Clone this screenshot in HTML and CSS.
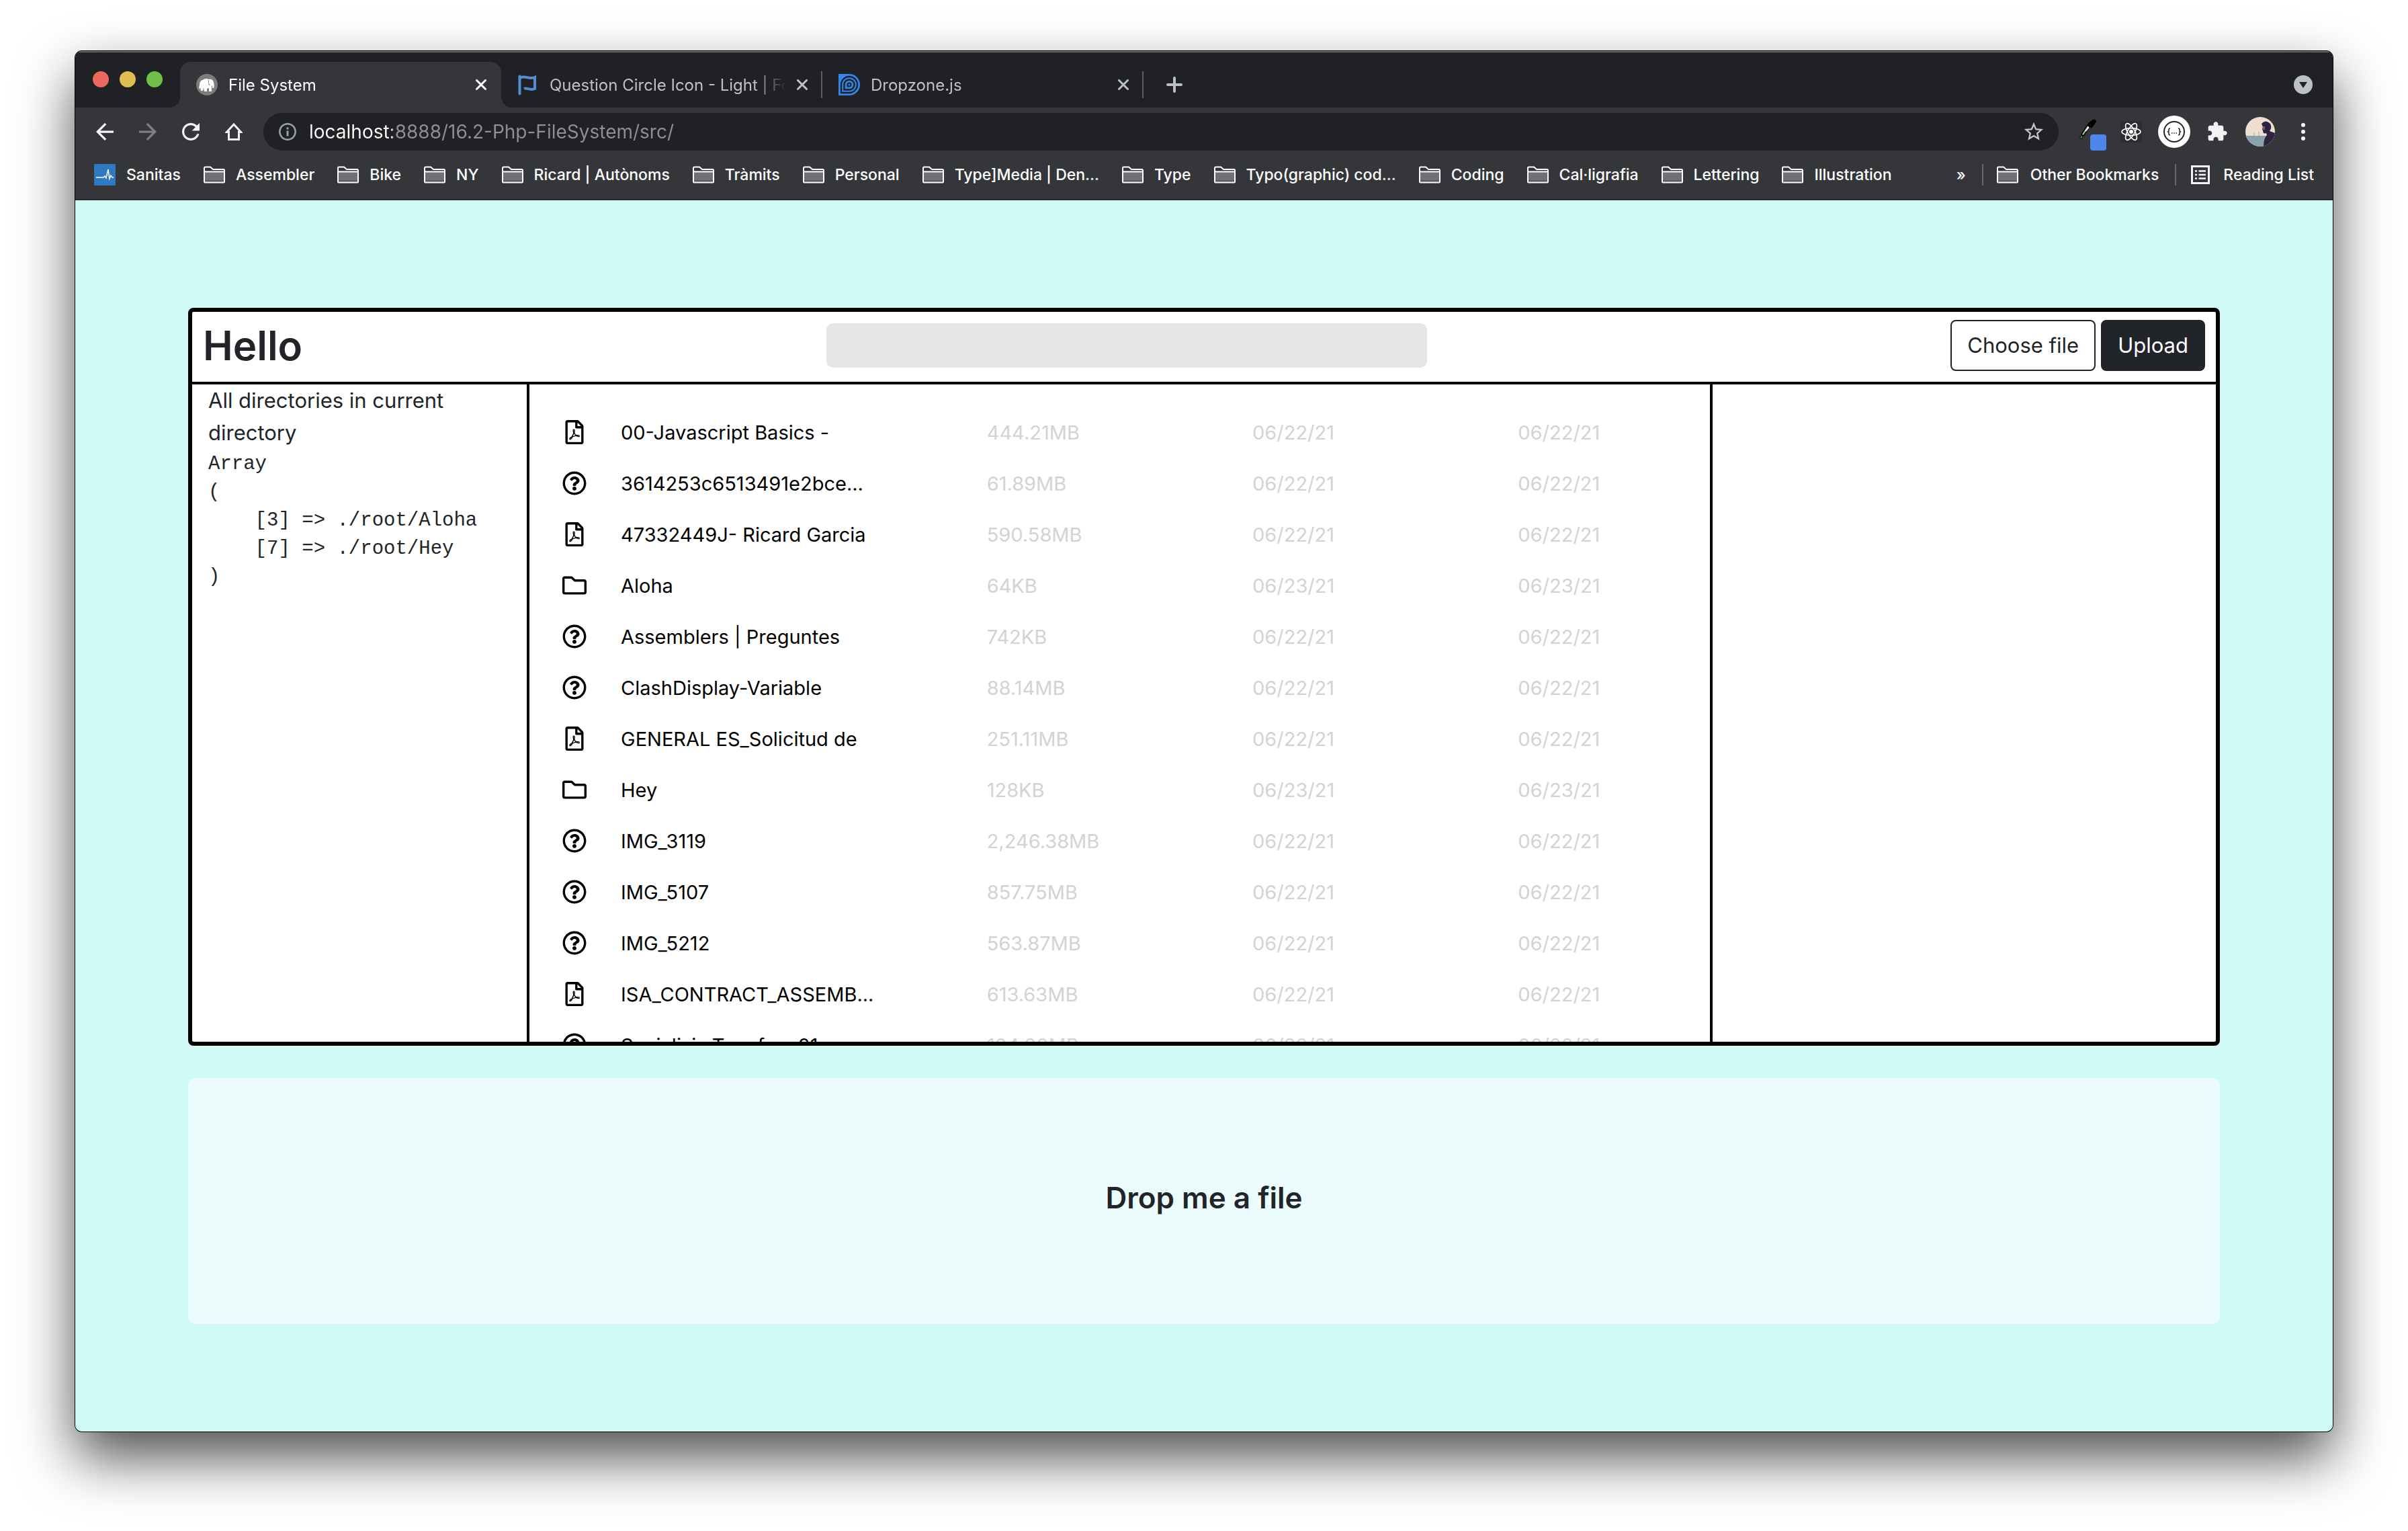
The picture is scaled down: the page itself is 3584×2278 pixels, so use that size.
FILE: index.html
```html
<!DOCTYPE html>
<html lang="en">
<head>
<meta charset="utf-8">
<title>File System</title>
<link rel="stylesheet" href="styles.css">
</head>
<body>
<svg class="sprite" aria-hidden="true">
  <symbol id="folder" viewBox="0 0 512 512"><path d="M464 128H272l-54.63-54.63c-6-6-14.14-9.37-22.63-9.37H48C21.49 64 0 85.49 0 112v288c0 26.51 21.49 48 48 48h416c26.51 0 48-21.49 48-48V176c0-26.51-21.49-48-48-48zm0 272H48V112h140.12l54.63 54.63c6 6 14.14 9.37 22.63 9.37H464v224z"/></symbol>
  <symbol id="unknown" viewBox="0 0 512 512"><path d="M256 8C119.043 8 8 119.083 8 256c0 136.997 111.043 248 248 248s248-111.003 248-248C504 119.083 392.957 8 256 8zm0 448c-110.532 0-200-89.431-200-200 0-110.495 89.472-200 200-200 110.491 0 200 89.471 200 200 0 110.53-89.431 200-200 200zm107.244-255.2c0 67.052-72.421 68.084-72.421 92.863V300c0 6.627-5.373 12-12 12h-45.647c-6.627 0-12-5.373-12-12v-8.659c0-35.745 27.1-50.034 47.579-61.516 17.561-9.845 28.324-16.541 28.324-29.579 0-17.246-21.999-28.693-39.784-28.693-23.189 0-33.894 10.977-48.942 29.969-4.057 5.12-11.46 6.071-16.666 2.124l-27.824-21.098c-5.107-3.872-6.251-11.066-2.644-16.363C184.846 131.491 214.94 112 261.794 112c49.071 0 101.45 38.304 101.45 88.8zM298 368c0 23.159-18.841 42-42 42s-42-18.841-42-42 18.841-42 42-42 42 18.841 42 42z"/></symbol>
  <symbol id="pdf" viewBox="-64 0 512 512"><path d="M369.9 97.9L286 14C277 5 264.8-.1 252.1-.1H48C21.5 0 0 21.5 0 48v416c0 26.5 21.5 48 48 48h288c26.5 0 48-21.5 48-48V131.9c0-12.7-5.1-25-14.1-34zM332.1 128H256V51.9l76.1 76.1zM48 464V48h160v104c0 13.3 10.7 24 24 24h104v288H48zm250.2-143.7c-12.2-12-47-8.7-64.4-6.5-17.2-10.5-28.7-25-36.8-46.3 3.9-16.1 10.1-40.6 5.4-56-4.2-26.2-37.8-23.6-42.6-5.9-4.4 16.1-.4 38.5 7 67.1-10 23.9-24.9 56-35.4 74.4-20 10.3-47 26.2-51 46.2-3.3 15.8 26 55.2 76.1-31.2 22.4-7.4 46.8-16.5 68.4-20.1 18.9 10.2 41 17 55.8 17 25.5 0 28-28.2 17.5-38.7zm-198.1 77.8c5.1-13.7 24.5-29.5 30.4-35-19 30.3-30.4 35.7-30.4 35zm81.6-190.6c7.4 0 6.7 32.1 1.8 40.8-4.4-13.9-4.3-40.8-1.8-40.8zm-24.4 136.6c9.7-16.9 18-37 24.7-54.7 8.3 15.1 18.9 27.2 30.1 35.5-20.8 4.3-38.9 13.1-54.8 19.2zm131.6-5s-5 6-37.3-7.8c35.1-2.6 40.9 5.4 37.3 7.8z"/></symbol>
  <symbol id="bmfolder" viewBox="0 0 32 32"><path d="M1 27V6q0-2 2-2h8l4 4h14q2 0 2 2v17q0 1-1 1H2q-1 0-1-1z" fill="#35363a"/><path d="M2 12h28v15H2z" fill="#707174"/><path d="M2 24h28v3H2z" fill="#5a5b5e"/><path d="M1 26.500V6q0-1.500 1.500-1.500H10l4 3.500h15.500q1.500 0 1.500 1.500v17q0 1-1 1H2q-1 0-1-1zM1 11.500h30" fill="none" stroke="#fff" stroke-width="2"/></symbol>
  <symbol id="close" viewBox="0 0 16 16"><path d="M1.500 1.500l13 13M14.500 1.500l-13 13" fill="none" stroke="currentColor" stroke-width="3" stroke-linecap="round"/></symbol>
</svg>

<div class="window">
  <header class="chrome">
    <div class="strip">
      <div class="lights">
        <button class="light red" aria-label="Close window"></button>
        <button class="light yellow" aria-label="Minimise"></button>
        <button class="light green" aria-label="Full screen"></button>
      </div>
      <div class="tab active">
        <svg class="favicon" viewBox="0 0 32 32"><circle cx="16" cy="16" r="16" fill="#7d7d7d"/><path d="M5 17c0-5 2-8 5-8 2-2 6-3 8-1 4-1 8 1 8 5 1 3 1 6 0 8h-2v-4l-1 1v8h-4v-5l-3 1v4h-4l-1-6-1 5H7l-1-5-1 3c-1-2-1-4 0-6z" fill="#fff"/><path d="M18.500 9v6l2 2" fill="none" stroke="#999" stroke-width="1.200"/></svg>
        <span class="tab-title">File System</span>
        <button class="tab-close" aria-label="Close tab"><svg><use href="#close"/></svg></button>
      </div>
      <div class="tab">
        <svg class="favicon" viewBox="0 0 32 32"><path d="M3.500 3.500v26" stroke="#538dd7" stroke-width="4" stroke-linecap="round"/><path d="M4 6c7-5 12 3 22-1v17c-7 3-12-2-16 0" fill="none" stroke="#538dd7" stroke-width="4"/></svg>
        <span class="tab-title">Question Circle Icon - Light | Fo</span>
        <button class="tab-close" aria-label="Close tab"><svg><use href="#close"/></svg></button>
      </div>
      <div class="tab">
        <svg class="favicon" viewBox="0 0 32 32"><path d="M0 0h16a16 16 0 010 32H0z" fill="#2f86eb"/><g fill="none" stroke="#202124" stroke-width="2.400"><path d="M4 28V16a12 12 0 1112 12z"/><path d="M8.500 23.500V16a7.500 7.500 0 117.500 7.500z"/></g><path d="M12.500 19.500V16a3.500 3.500 0 113.500 3.500z" fill="#202124"/><circle cx="16" cy="16" r="1.500" fill="#2f86eb"/></svg>
        <span class="tab-title">Dropzone.js</span>
        <button class="tab-close" aria-label="Close tab"><svg><use href="#close"/></svg></button>
      </div>
      <button class="new-tab" aria-label="New tab"><svg viewBox="0 0 24 24"><path d="M12 2v20M2 12h20" stroke="#bdc1c6" stroke-width="4" stroke-linecap="round"/></svg></button>
      <button class="tab-search" aria-label="Search tabs"><svg viewBox="0 0 28 28"><circle cx="14" cy="14" r="14" fill="#bdc1c6"/><path d="M8 10h12l-6 9z" fill="#202124"/></svg></button>
    </div>

    <div class="toolbar">
      <button class="tool" aria-label="Back"><svg class="i26" viewBox="4 4 16 16"><path d="M20 11H7.830l5.590-5.590L12 4l-8 8 8 8 1.410-1.410L7.830 13H20v-2z" fill="#f1f3f4"/></svg></button>
      <button class="tool" aria-label="Forward"><svg class="i26" viewBox="4 4 16 16"><path d="M4 13h12.170l-5.590 5.590L12 20l8-8-8-8-1.410 1.410L16.170 11H4z" fill="#7e7f82"/></svg></button>
      <button class="tool" aria-label="Reload"><svg class="i26" viewBox="4 4 16 16"><path d="M17.650 6.350C16.200 4.900 14.210 4 12 4c-4.420 0-7.990 3.580-7.990 8s3.570 8 7.990 8c3.730 0 6.840-2.550 7.730-6h-2.080c-.82 2.330-3.040 4-5.650 4-3.310 0-6-2.690-6-6s2.690-6 6-6c1.660 0 3.140.69 4.220 1.780L13 11h7V4l-2.350 2.350z" fill="#f1f3f4"/></svg></button>
      <button class="tool" aria-label="Home"><svg class="i26" viewBox="0 0 26 26"><path d="M13 2L2.500 13.500H5.500V24.500H20.500V13.500H23.500z" fill="none" stroke="#f1f3f4" stroke-width="3"/></svg></button>
      <div class="omnibox">
        <svg class="i26" viewBox="0 0 26 26"><circle cx="13" cy="13" r="11.700" fill="none" stroke="#9aa0a6" stroke-width="2.500"/><path d="M13 11.500v8M13 6.500v3" stroke="#9aa0a6" stroke-width="3"/></svg>
        <input class="url" type="text" aria-label="Address" value="localhost:8888/16.2-Php-FileSystem/src/">
        <button class="star" aria-label="Bookmark this page"><svg viewBox="0 0 24 24"><path d="M22 9.240l-7.190-.62L12 2 9.190 8.630 2 9.240l5.460 4.730L5.820 21 12 17.270 18.180 21l-1.630-7.030L22 9.240zM12 15.400l-3.760 2.270 1-4.280-3.320-2.880 4.380-.38L12 6.100l1.710 4.040 4.380.38-3.320 2.880 1 4.280L12 15.400z" fill="#c4c7ca"/></svg></button>
      </div>
      <button class="tool" aria-label="Colour picker"><svg class="picker" viewBox="0 0 48 48"><path d="M23 14l3 3-9 13-3-2z" fill="#8fcf9a" stroke="#000" stroke-width="1.500"/><path d="M25 17l-5 6" stroke="#fff" stroke-width="2"/><path d="M24 11l7-5q5-1 5 3l-4 6-3 4-6-5z" fill="#000"/><path d="M14 28q3 5 0 7-4-1 0-7z" fill="#3f7f45" stroke="#000"/><rect x="27" y="28" width="24" height="24" rx="4" fill="#4f86ec"/></svg></button>
      <button class="tool" aria-label="React developer tools"><svg class="i32" viewBox="0 0 32 32"><rect width="32" height="32" rx="2" fill="#2d2e32"/><g fill="none" stroke="#fff" stroke-width="1.700"><ellipse cx="16" cy="16" rx="14" ry="5.300"/><ellipse cx="16" cy="16" rx="14" ry="5.300" transform="rotate(60 16 16)"/><ellipse cx="16" cy="16" rx="14" ry="5.300" transform="rotate(120 16 16)"/></g><circle cx="16" cy="16" r="3" fill="#fff"/></svg></button>
      <button class="tool" aria-label="JSON viewer"><svg class="i48" viewBox="0 0 48 48"><circle cx="24" cy="24" r="24" fill="#fff"/><circle cx="24" cy="24" r="15" fill="none" stroke="#222" stroke-width="2"/><path d="M18 19q-2 0-2 2v2l-1.500 1 1.500 1v2q0 2 2 2M30 19q2 0 2 2v2l1.500 1-1.500 1v2q0 2-2 2" fill="none" stroke="#222" stroke-width="1.500"/><path d="M20 26h1.500M23.300 26h1.500M26.500 26h1.500" stroke="#222" stroke-width="1.500"/></svg></button>
      <button class="tool" aria-label="Extensions"><svg class="i32" viewBox="0 0 24 24"><path d="M20.500 11H19V7c0-1.100-.9-2-2-2h-4V3.500C13 2.120 11.880 1 10.500 1S8 2.120 8 3.500V5H4c-1.100 0-1.990.9-1.990 2v3.800H3.500c1.490 0 2.700 1.210 2.700 2.700s-1.210 2.700-2.700 2.700H2V20c0 1.100.9 2 2 2h3.800v-1.500c0-1.490 1.210-2.700 2.700-2.700 1.490 0 2.700 1.210 2.700 2.700V22H17c1.100 0 2-.9 2-2v-4h1.500c1.380 0 2.500-1.120 2.500-2.500S21.880 11 20.500 11z" fill="#f1f3f4"/></svg></button>
      <button class="tool" aria-label="Profile"><svg class="avatar" viewBox="0 0 44 44"><rect width="44" height="44" fill="#efdfd0"/><path d="M0 28h44v16H0z" fill="#8aa3ab"/><path d="M13 23v5M20 22v6" stroke="#b9a79a"/><path d="M24 10q6-7 13 0 3 6-1 11l8 3v20H27q0-12 5-17l-1-3q-5 2-5-4l-1-1 1-4z" fill="#2d2444"/><path d="M26 14l3 0v5h-3l-1-1z" fill="#8a5560"/></svg></button>
      <button class="tool" aria-label="Menu"><svg class="i26" viewBox="0 0 26 26"><g fill="#f1f3f4"><circle cx="13" cy="3" r="3"/><circle cx="13" cy="13" r="3"/><circle cx="13" cy="23" r="3"/></g></svg></button>
    </div>

    <nav class="bookmarks">
      <a href="#"><svg class="i32" viewBox="0 0 32 32"><rect width="32" height="32" fill="#2f78c4"/><path d="M3 20h11l2-2 2 3 3-13 2 14 2-5 2 3h2" fill="none" stroke="#fff" stroke-width="1.500"/></svg>Sanitas</a>
      <a href="#"><svg class="i32"><use href="#bmfolder"/></svg>Assembler</a>
      <a href="#"><svg class="i32"><use href="#bmfolder"/></svg>Bike</a>
      <a href="#"><svg class="i32"><use href="#bmfolder"/></svg>NY</a>
      <a href="#"><svg class="i32"><use href="#bmfolder"/></svg>Ricard | Autònoms</a>
      <a href="#"><svg class="i32"><use href="#bmfolder"/></svg>Tràmits</a>
      <a href="#"><svg class="i32"><use href="#bmfolder"/></svg>Personal</a>
      <a href="#"><svg class="i32"><use href="#bmfolder"/></svg>Type]Media | Den...</a>
      <a href="#"><svg class="i32"><use href="#bmfolder"/></svg>Type</a>
      <a href="#"><svg class="i32"><use href="#bmfolder"/></svg>Typo(graphic) cod...</a>
      <a href="#"><svg class="i32"><use href="#bmfolder"/></svg>Coding</a>
      <a href="#"><svg class="i32"><use href="#bmfolder"/></svg>Cal·ligrafia</a>
      <a href="#"><svg class="i32"><use href="#bmfolder"/></svg>Lettering</a>
      <a href="#"><svg class="i32"><use href="#bmfolder"/></svg>Illustration</a>
      <div class="bookmarks-end">
        <button class="more" aria-label="More bookmarks">»</button>
        <a class="ruled" href="#"><svg class="i32"><use href="#bmfolder"/></svg>Other Bookmarks</a>
        <a class="ruled" href="#"><svg class="i32" viewBox="0 0 32 32"><path d="M3.500 3.500h25v25h-25z" fill="none" stroke="#f1f3f4" stroke-width="3"/><path d="M8 10.500h3M8 16h3M8 21.500h3M13.500 10.500H24M13.500 16H24M13.500 21.500H24" stroke="#f1f3f4" stroke-width="2.600"/></svg>Reading List</a>
      </div>
    </nav>
  </header>

  <main class="page">
    <section class="explorer">
      <div class="explorer-head">
        <h2 class="brand">Hello</h2>
        <input class="search" type="search" aria-label="Search files">
        <form class="upload">
          <label class="btn outline" for="file">Choose file</label>
          <input class="file" id="file" type="file">
          <button class="btn solid" type="button">Upload</button>
        </form>
      </div>
      <div class="explorer-body">
        <aside class="tree">
          <p>All directories in current directory</p>
<pre>Array
(
    [3] =&gt; ./root/Aloha
    [7] =&gt; ./root/Hey
)</pre>
        </aside>
        <div class="listing">
          <table class="files">
            <colgroup><col class="c-icon"><col class="c-name"><col class="c-meta"><col class="c-meta"><col></colgroup>
            <tbody>
              <tr><td><svg><use href="#pdf"/></svg></td><td>00-Javascript Basics -</td><td>444.21MB</td><td>06/22/21</td><td>06/22/21</td></tr>
              <tr><td><svg><use href="#unknown"/></svg></td><td>3614253c6513491e2bce...</td><td>61.89MB</td><td>06/22/21</td><td>06/22/21</td></tr>
              <tr><td><svg><use href="#pdf"/></svg></td><td>47332449J- Ricard Garcia</td><td>590.58MB</td><td>06/22/21</td><td>06/22/21</td></tr>
              <tr><td><svg><use href="#folder"/></svg></td><td>Aloha</td><td>64KB</td><td>06/23/21</td><td>06/23/21</td></tr>
              <tr><td><svg><use href="#unknown"/></svg></td><td>Assemblers | Preguntes</td><td>742KB</td><td>06/22/21</td><td>06/22/21</td></tr>
              <tr><td><svg><use href="#unknown"/></svg></td><td>ClashDisplay-Variable</td><td>88.14MB</td><td>06/22/21</td><td>06/22/21</td></tr>
              <tr><td><svg><use href="#pdf"/></svg></td><td>GENERAL ES_Solicitud de</td><td>251.11MB</td><td>06/22/21</td><td>06/22/21</td></tr>
              <tr><td><svg><use href="#folder"/></svg></td><td>Hey</td><td>128KB</td><td>06/23/21</td><td>06/23/21</td></tr>
              <tr><td><svg><use href="#unknown"/></svg></td><td>IMG_3119</td><td>2,246.38MB</td><td>06/22/21</td><td>06/22/21</td></tr>
              <tr><td><svg><use href="#unknown"/></svg></td><td>IMG_5107</td><td>857.75MB</td><td>06/22/21</td><td>06/22/21</td></tr>
              <tr><td><svg><use href="#unknown"/></svg></td><td>IMG_5212</td><td>563.87MB</td><td>06/22/21</td><td>06/22/21</td></tr>
              <tr><td><svg><use href="#pdf"/></svg></td><td>ISA_CONTRACT_ASSEMB...</td><td>613.63MB</td><td>06/22/21</td><td>06/22/21</td></tr>
              <tr><td><svg><use href="#unknown"/></svg></td><td>SocialisimTypeface01</td><td>104.80MB</td><td>06/22/21</td><td>06/22/21</td></tr>
            </tbody>
          </table>
        </div>
        <aside class="preview"></aside>
      </div>
    </section>
    <section class="dropzone"><button class="drop" type="button">Drop me a file</button></section>
  </main>
</div>
</body>
</html>
```
FILE: styles.css
```css
* { box-sizing: border-box; }

body {
  margin: 0;
  height: 100vh;
  padding: 76px 112px 148px;
  background: #fff;
  color: #212529;
  font-family: Inter, "Liberation Sans", sans-serif;
  overflow: hidden;
}

button, input { font: inherit; color: inherit; border: 0; padding: 0; margin: 0; background: none; }
a { color: inherit; text-decoration: none; }
svg { display: block; flex: none; }
.sprite { display: none; }

.i26 { width: 26px; height: 26px; }
.i32 { width: 32px; height: 32px; }
.i48 { width: 48px; height: 48px; }
.picker { width: 48px; height: 48px; overflow: visible; }

.window {
  display: flex;
  flex-direction: column;
  height: 100%;
  border-radius: 10px;
  overflow: hidden;
  box-shadow: 0 0 0 1px #000, 0 38px 84px rgba(0, 0, 0, .7);
}

/* Browser frame */
.chrome {
  background: #35363a;
  color: #fff;
  border-bottom: 2px solid #27282b;
  font-size: 24px;
}

.strip {
  display: flex;
  align-items: flex-end;
  height: 84px;
  background: #202124;
  box-shadow: inset 0 2px #6a6c6b;
}

.lights { display: flex; align-items: center; gap: 16px; height: 84px; padding: 0 26px; }
.light { width: 24px; height: 24px; border-radius: 50%; }
.red { background: #ed695e; }
.yellow { background: #e0be4f; }
.green { background: #71be48; }

.tab {
  position: relative;
  display: flex;
  align-items: center;
  width: 478px;
  height: 68px;
  padding: 0 22px 0 24px;
  color: #bdc1c6;
}
.tab:not(.active)::after {
  content: "";
  position: absolute;
  right: 0;
  top: 14px;
  width: 2px;
  height: 40px;
  background: #5a5c5f;
}
.tab.active { background: #35363a; border-radius: 16px 16px 0 0; color: #fff; }
.tab.active::before, .tab.active::after {
  content: "";
  position: absolute;
  bottom: 0;
  width: 16px;
  height: 16px;
}
.tab.active::before { right: 100%; background: radial-gradient(circle at 0 0, transparent 16px, #35363a 16px); }
.tab.active::after { left: 100%; background: radial-gradient(circle at 100% 0, transparent 16px, #35363a 16px); }
.favicon { width: 32px; height: 32px; margin-right: 16px; }
.tab-title {
  flex: 1;
  white-space: nowrap;
  overflow: hidden;
  margin-right: 16px;
  -webkit-mask-image: linear-gradient(to left, transparent, #000 48px);
  mask-image: linear-gradient(to left, transparent, #000 48px);
}
.tab-close svg { width: 16px; height: 16px; }
.new-tab, .tab-search { display: grid; place-items: center; height: 68px; }
.new-tab { width: 92px; }
.tab-search { width: 88px; margin-left: auto; }
.new-tab svg { width: 24px; height: 24px; }
.tab-search svg { width: 28px; height: 28px; }

.toolbar { display: flex; align-items: center; height: 72px; padding: 0 12px; }
.tool { display: grid; place-items: center; width: 64px; height: 56px; }
.avatar { width: 44px; height: 44px; border-radius: 50%; }
.omnibox {
  flex: 1;
  display: flex;
  align-items: center;
  gap: 19px;
  height: 56px;
  margin: 0 12px;
  padding: 0 20px 0 23px;
  border-radius: 28px;
  background: #202124;
  font-size: 28px;
}
.url {
  flex: 1;
  color: transparent;
  background: linear-gradient(to right, #fff 124px, #8d8f92 124px);
  -webkit-background-clip: text;
  background-clip: text;
}
.star svg { width: 34px; height: 34px; }

.bookmarks {
  display: flex;
  align-items: center;
  gap: 34px;
  height: 64px;
  padding: 0 28px 8px;
  font-size: 23px;
  font-weight: 500;
  white-space: nowrap;
}
.bookmarks a { display: flex; align-items: center; gap: 16px; }
.bookmarks-end { display: flex; align-items: center; gap: 24px; margin-left: auto; }
.bookmarks .ruled { gap: 18px; border-left: 2px solid #67686b; padding-left: 20px; }

/* Page */
.page {
  flex: 1;
  display: grid;
  grid-template-rows: minmax(0, 3fr) minmax(0, 1fr);
  gap: 48px;
  min-height: 0;
  padding: 160px 168px;
  background: #cffaf5;
}

.explorer {
  display: flex;
  flex-direction: column;
  min-height: 0;
  border: 6px solid #000;
  border-radius: 8px;
  background: #fff;
  overflow: hidden;
}
.explorer-head {
  display: flex;
  align-items: center;
  justify-content: space-between;
  padding: 12px 16px 16px;
  border-bottom: 4px solid #000;
}
.brand { margin: 0; font-size: 60px; font-weight: 600; line-height: 76px; }
.search { width: 30%; height: 66px; border-radius: 10px; background: #e6e6e6; }
.upload { display: flex; gap: 8px; }
.file { display: none; }
.btn {
  height: 76px;
  padding: 0 23px;
  border: 2px solid #212529;
  border-radius: 8px;
  font-size: 31px;
  line-height: 72px;
}
.solid { background: #212529; color: #fff; }

.explorer-body { flex: 1; display: grid; grid-template-columns: 2fr 7fr 3fr; min-height: 0; }
.tree { padding: 0 24px; border-right: 4px solid #000; font-size: 31px; line-height: 48px; }
.tree p, .tree pre { margin: 0; }
.tree pre { padding-top: 2px; font: 29px/42px "Liberation Mono", monospace; }
.listing { padding-top: 33px; overflow: hidden; }
.preview { border-left: 4px solid #000; }

.files { width: 100%; table-layout: fixed; border-collapse: collapse; font-size: 29px; color: #d3d3d3; }
.files td { height: 76px; padding: 0; white-space: nowrap; }
.files td:first-child { padding-left: 49px; color: #000; }
.files td:nth-child(2) { color: #000; }
.files svg { width: 36px; height: 36px; fill: currentColor; }
.c-icon { width: 136px; }
.c-name { width: 31%; }
.c-meta { width: 22.5%; }

.dropzone { display: flex; border-radius: 10px; background: #ecfcfc; }
.drop { flex: 1; padding-bottom: 10px; font-size: 44px; font-weight: 600; }
```
